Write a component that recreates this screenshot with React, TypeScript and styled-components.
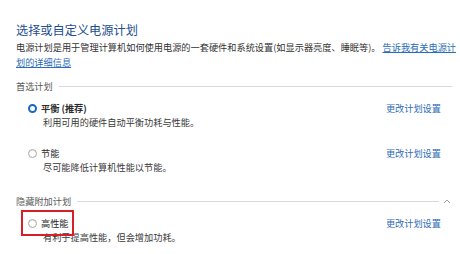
import * as React from 'react';
import styled, { createGlobalStyle } from 'styled-components';

const GlobalStyle = createGlobalStyle`
  html, body {
    margin: 0;
    padding: 0;
    background: #ffffff;
  }
  body {
    width: 460px;
    height: 254px;
    overflow: hidden;
    font-family: "Noto Sans CJK SC", "Noto Sans", sans-serif;
    color: #3a3a3a;
  }
`;

const Page = styled.div`
  padding: 22px 8px 0 16px;
`;

const Title = styled.h1`
  margin: 0;
  font-size: 12.2px;
  line-height: 16px;
  font-weight: 400;
  color: #1f4f8f;
`;

const Intro = styled.p`
  margin: 2px -6px 0 0;
  font-size: 9.2px;
  line-height: 15px;
  color: #333333;
  white-space: nowrap;
`;

const Link = styled.a`
  margin-left: 2px;
  color: #2b6cb8;
  text-decoration: underline;
  text-underline-offset: 1px;
  cursor: pointer;
`;

const GroupHeader = styled.div<{ $gap: number }>`
  display: flex;
  align-items: center;
  margin-top: ${(p) => p.$gap}px;
  height: 16px;
  font-size: 9.2px;
  color: #5a5a5a;
`;

const GroupRule = styled.div<{ $end: number }>`
  flex: 1;
  height: 1px;
  margin: 0 ${(p) => p.$end}px 0 6px;
  background: #d9d9d9;
`;

const Chevron = styled.svg`
  width: 8px;
  height: 6px;
  margin-right: 1px;
`;

const Plan = styled.div<{ $gap: number }>`
  margin-top: ${(p) => p.$gap}px;
`;

const PlanRow = styled.div`
  display: flex;
  align-items: center;
  justify-content: space-between;
  height: 14px;
  padding-left: 12px;
  padding-right: 11px;
`;

const Choice = styled.label<{ $marked?: boolean }>`
  position: relative;
  display: flex;
  align-items: center;
  gap: 4px;
  font-size: 9.2px;
  line-height: 14px;
  color: #2a2a2a;

  &::after {
    content: '';
    display: ${(p) => (p.$marked ? 'block' : 'none')};
    position: absolute;
    top: -6px;
    bottom: -6px;
    left: -7px;
    right: -5px;
    border: 2px solid #d71f2a;
  }
`;

const Radio = styled.span<{ $checked?: boolean }>`
  box-sizing: border-box;
  width: 9px;
  height: 9px;
  border-radius: 50%;
  background: #ffffff;
  border: ${(p) => (p.$checked ? '2px solid #1769c2' : '1px solid #a8a8a8')};
  box-shadow: ${(p) => (p.$checked ? 'none' : 'inset 0 1px 1px #e6e6e6')};
`;

const PlanName = styled.span<{ $bold?: boolean }>`
  font-weight: ${(p) => (p.$bold ? 700 : 400)};
`;

const PlanDesc = styled.div`
  padding-left: 27px;
  font-size: 9.2px;
  line-height: 15px;
  color: #3a3a3a;
`;

const SettingsLink = styled.a`
  font-size: 9.2px;
  line-height: 14px;
  color: #2f6db5;
  cursor: pointer;
`;

type PlanData = {
  name: string;
  desc: string;
  checked?: boolean;
  bold?: boolean;
  marked?: boolean;
  gap: number;
};

const PlanItem: React.FC<{ plan: PlanData }> = ({ plan }) => (
  <Plan $gap={plan.gap}>
    <PlanRow>
      <Choice $marked={plan.marked}>
        <Radio $checked={plan.checked} />
        <PlanName $bold={plan.bold}>{plan.name}</PlanName>
      </Choice>
      <SettingsLink>更改计划设置</SettingsLink>
    </PlanRow>
    <PlanDesc>{plan.desc}</PlanDesc>
  </Plan>
);

const preferred: PlanData[] = [
  { name: '平衡 (推荐)', desc: '利用可用的硬件自动平衡功耗与性能。', checked: true, bold: true, gap: 7 },
  { name: '节能', desc: '尽可能降低计算机性能以节能。', gap: 16 },
];

const extra: PlanData[] = [
  { name: '高性能', desc: '有利于提高性能，但会增加功耗。', marked: true, gap: 7 },
];

export default function App() {
  return (
    <Page>
      <GlobalStyle />
      <Title>选择或自定义电源计划</Title>
      <Intro>
        电源计划是用于管理计算机如何使用电源的一套硬件和系统设置(如显示器亮度、睡眠等)。<Link>
          告诉我有关电源计
          <br />
          划的详细信息
        </Link>
      </Intro>

      <GroupHeader $gap={8}>
        首选计划
        <GroupRule $end={0} />
      </GroupHeader>
      {preferred.map((p) => (
        <PlanItem key={p.name} plan={p} />
      ))}

      <GroupHeader $gap={18}>
        隐藏附加计划
        <GroupRule $end={4} />
        <Chevron viewBox="0 0 8 6">
          <path d="M1 5 L4 2 L7 5" fill="none" stroke="#a0a0a0" strokeWidth="1" />
        </Chevron>
      </GroupHeader>
      {extra.map((p) => (
        <PlanItem key={p.name} plan={p} />
      ))}
    </Page>
  );
}
